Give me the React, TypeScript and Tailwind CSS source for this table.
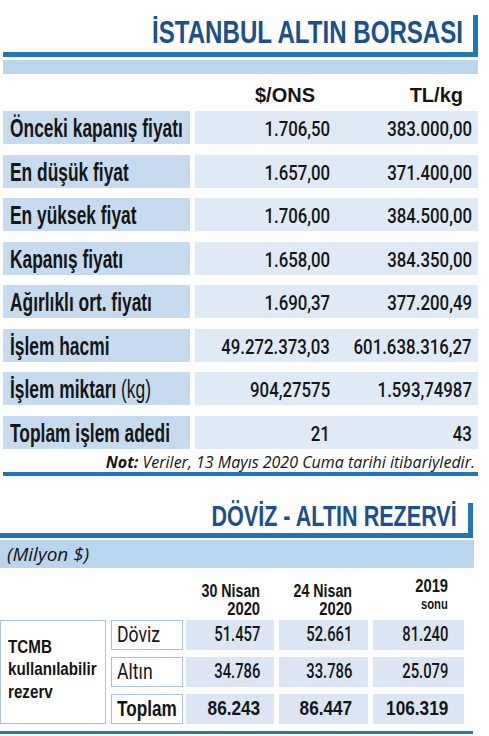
import React from "react";

const rows1: [React.ReactNode, string, string][] = [
  ["Önceki kapanış fiyatı", "1.706,50", "383.000,00"],
  ["En düşük fiyat", "1.657,00", "371.400,00"],
  ["En yüksek fiyat", "1.706,00", "384.500,00"],
  ["Kapanış fiyatı", "1.658,00", "384.350,00"],
  ["Ağırlıklı ort. fiyatı", "1.690,37", "377.200,49"],
  ["İşlem hacmi", "49.272.373,03", "601.638.316,27"],
  [
    <>
      İşlem miktarı <span className="font-normal">(kg)</span>
    </>,
    "904,27575",
    "1.593,74987",
  ],
  ["Toplam işlem adedi", "21", "43"],
];

const rows2: [string, string, string, string, boolean][] = [
  ["Döviz", "51.457", "52.661", "81.240", false],
  ["Altın", "34.786", "33.786", "25.079", false],
  ["Toplam", "86.243", "86.447", "106.319", true],
];

export default function App() {
  return (
    <div className="w-[489px] h-[736px] bg-white overflow-hidden font-['Liberation_Sans',Arial,sans-serif] text-[#151515]">
      {/* Section 1 */}
      <div className="pt-[15px]">
        <div className="ml-[3px] w-[475px] h-[42px] border-r-[5px] border-b-[5px] border-[#1f76b8] flex items-end justify-end pr-[10px] pb-[4px]">
          <span className="whitespace-nowrap text-[32px] leading-[32px] font-bold text-[#1c4f8c] origin-right scale-x-[0.753]">
            İSTANBUL ALTIN BORSASI
          </span>
        </div>
      </div>
      <div className="ml-[3px] mt-[3px] w-[475px] h-[14px] bg-[#bad5ee]" />
      <div className="mt-[11px] h-[20px] flex text-[20px] leading-[20px] font-bold">
        <div className="w-[195px]" />
        <div className="w-[135px] flex justify-end pr-[15px]">
          <span className="whitespace-nowrap">$/ONS</span>
        </div>
        <div className="w-[142px] flex justify-end pr-[9px]">
          <span className="whitespace-nowrap">TL/kg</span>
        </div>
      </div>
      <div className="mt-[6px] flex flex-col gap-[10.5px]">
        {rows1.map((r, i) => (
          <div key={i} className="flex h-[33px] ml-[3px]">
            <div className="w-[187px] bg-[#c7dbf0] flex pl-[7px] pt-[5px] text-[25px] leading-[25px] font-bold">
              <span className="whitespace-nowrap origin-left scale-x-[0.695]">{r[0]}</span>
            </div>
            <div className="ml-[5px] w-[283px] bg-[#dfeaf6] flex pt-[8px] text-[21px] leading-[21px] font-['Roboto',sans-serif] font-medium">
              <div className="w-[135px] flex justify-end">
                <span className="whitespace-nowrap origin-right scale-x-[0.8]">{r[1]}</span>
              </div>
              <div className="w-[142px] flex justify-end">
                <span className="whitespace-nowrap origin-right scale-x-[0.8]">{r[2]}</span>
              </div>
            </div>
          </div>
        ))}
      </div>
      <div className="mt-[6px] h-[15px] flex justify-end pr-[14px] font-['Open_Sans',sans-serif] italic text-[16px] leading-[15px]">
        <span className="whitespace-nowrap">
          <b>Not:</b> Veriler, 13 Mayıs 2020 Cuma tarihi itibariyledir.
        </span>
      </div>
      <div className="mt-[2.5px] ml-[3px] w-[475px] h-[4px] bg-[#1f76b8]" />

      {/* Section 2 */}
      <div className="mt-[27px] w-[473px] h-[35px] border-r-[5px] border-b-[5px] border-[#1f76b8] flex items-end justify-end pr-[11px] pb-[2.5px]">
        <span className="whitespace-nowrap text-[29px] leading-[29px] font-bold text-[#1c4f8c] origin-right scale-x-[0.744]">
          DÖVİZ - ALTIN REZERVİ
        </span>
      </div>
      <div className="mt-[2px] w-[474px] h-[28px] bg-[#bad5ee] pl-[7px] font-['Open_Sans',sans-serif] italic text-[19px] leading-[28px]">
        (Milyon $)
      </div>
      <div className="h-[52px] flex items-end pb-[2px] font-bold">
        <div className="w-[186px] shrink-0" />
        <div className="w-[88px] shrink-0 pr-[14px] flex flex-col items-end text-[18px] leading-[18px]">
          <span className="whitespace-nowrap origin-right scale-x-[0.79]">30 Nisan</span>
          <span className="whitespace-nowrap origin-right scale-x-[0.82]">2020</span>
        </div>
        <div className="ml-[5px] w-[89px] shrink-0 pr-[16px] flex flex-col items-end text-[18px] leading-[18px]">
          <span className="whitespace-nowrap origin-right scale-x-[0.79]">24 Nisan</span>
          <span className="whitespace-nowrap origin-right scale-x-[0.82]">2020</span>
        </div>
        <div className="ml-[5px] w-[91px] shrink-0 pr-[16px] mb-[5px] flex flex-col items-end leading-[18px]">
          <span className="whitespace-nowrap origin-right scale-x-[0.82] text-[18px]">2019</span>
          <span className="whitespace-nowrap origin-right scale-x-[0.75] text-[15px]">sonu</span>
        </div>
      </div>
      <div className="flex h-[104px]">
        <div className="w-[106px] shrink-0 border border-[#a8c2de] bg-white flex items-center pl-[7px] pb-[5px]">
          <div className="text-[19px] leading-[22.5px] font-bold origin-left scale-x-[0.8] whitespace-nowrap">
            TCMB
            <br />
            kullanılabilir
            <br />
            rezerv
          </div>
        </div>
        <div className="ml-[5px] flex flex-col gap-[7px]">
          {rows2.map((r, i) => (
            <div
              key={i}
              className={`flex h-[30px] ${r[4] ? "font-bold" : "font-['Roboto',sans-serif] font-medium"}`}
            >
              <div
                className={`w-[72px] shrink-0 border border-[#a8c2de] bg-white flex pl-[5px] text-[22px] leading-[27px] ${
                  r[4] ? "" : "font-normal"
                }`}
              >
                <span className={`whitespace-nowrap origin-left ${r[4] ? "scale-x-[0.78]" : "scale-x-[0.8]"}`}>{r[0]}</span>
              </div>
              <div className="ml-[3px] w-[88px] shrink-0 bg-[#dbe5f3] flex justify-end pr-[14px] text-[20px] leading-[28px]">
                <span className={`whitespace-nowrap origin-right ${r[4] ? "scale-x-[0.86]" : "scale-x-[0.74]"}`}>{r[1]}</span>
              </div>
              <div className="ml-[5px] w-[89px] shrink-0 bg-[#dbe5f3] flex justify-end pr-[16px] text-[20px] leading-[28px]">
                <span className={`whitespace-nowrap origin-right ${r[4] ? "scale-x-[0.86]" : "scale-x-[0.74]"}`}>{r[2]}</span>
              </div>
              <div className="ml-[5px] w-[91px] shrink-0 bg-[#dbe5f3] flex justify-end pr-[16px] text-[20px] leading-[28px]">
                <span className={`whitespace-nowrap origin-right ${r[4] ? "scale-x-[0.86]" : "scale-x-[0.74]"}`}>{r[3]}</span>
              </div>
            </div>
          ))}
        </div>
      </div>
      <div className="mt-[7px] w-[473px] h-[3px] bg-[#1f76b8]" />
    </div>
  );
}
